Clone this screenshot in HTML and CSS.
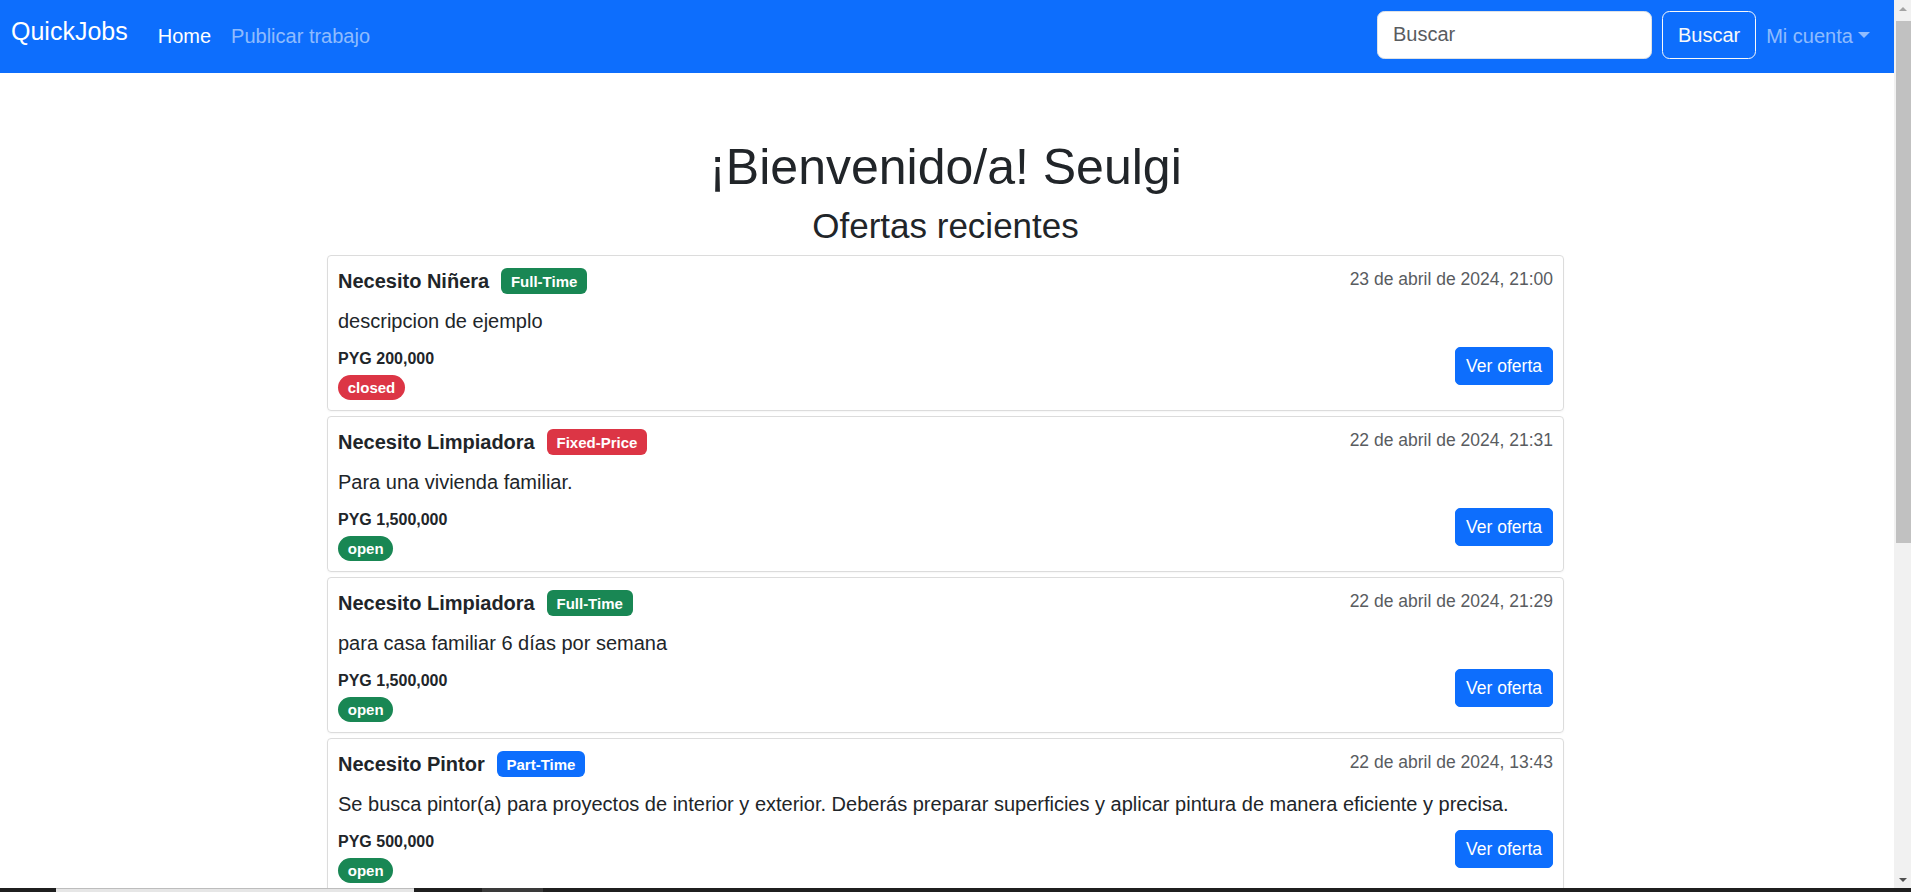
FILE: index.html
```html
<!DOCTYPE html>
<html lang="es">
<head>
<meta charset="utf-8">
<title>QuickJobs</title>
<link rel="stylesheet" href="styles.css">
</head>
<body>
<div class="screen">
  <div class="window">
    <div class="page">
      <nav class="navbar">
        <a class="brand" href="#">QuickJobs</a>
        <ul class="nav">
          <li><a class="nav-link active" href="#">Home</a></li>
          <li><a class="nav-link" href="#">Publicar trabajo</a></li>
        </ul>
        <form class="search">
          <input class="search-input" type="search" placeholder="Buscar">
          <button class="btn-outline" type="button">Buscar</button>
        </form>
        <a class="nav-link account" href="#">Mi cuenta</a>
      </nav>

      <main class="main">
        <h1 class="welcome">¡Bienvenido/a! Seulgi</h1>
        <h2 class="subtitle">Ofertas recientes</h2>

        <div class="card">
          <div class="card-head">
            <div class="title">Necesito Niñera <span class="badge green">Full-Time</span></div>
            <div class="date">23 de abril de 2024, 21:00</div>
          </div>
          <p class="desc">descripcion de ejemplo</p>
          <div class="card-foot">
            <div class="meta">
              <div class="price">PYG 200,000</div>
              <span class="pill red">closed</span>
            </div>
            <button class="btn-primary" type="button">Ver oferta</button>
          </div>
        </div>

        <div class="card">
          <div class="card-head">
            <div class="title">Necesito Limpiadora <span class="badge red">Fixed-Price</span></div>
            <div class="date">22 de abril de 2024, 21:31</div>
          </div>
          <p class="desc">Para una vivienda familiar.</p>
          <div class="card-foot">
            <div class="meta">
              <div class="price">PYG 1,500,000</div>
              <span class="pill green">open</span>
            </div>
            <button class="btn-primary" type="button">Ver oferta</button>
          </div>
        </div>

        <div class="card">
          <div class="card-head">
            <div class="title">Necesito Limpiadora <span class="badge green">Full-Time</span></div>
            <div class="date">22 de abril de 2024, 21:29</div>
          </div>
          <p class="desc">para casa familiar 6 días por semana</p>
          <div class="card-foot">
            <div class="meta">
              <div class="price">PYG 1,500,000</div>
              <span class="pill green">open</span>
            </div>
            <button class="btn-primary" type="button">Ver oferta</button>
          </div>
        </div>

        <div class="card">
          <div class="card-head">
            <div class="title">Necesito Pintor <span class="badge blue">Part-Time</span></div>
            <div class="date">22 de abril de 2024, 13:43</div>
          </div>
          <p class="desc">Se busca pintor(a) para proyectos de interior y exterior. Deberás preparar superficies y aplicar pintura de manera eficiente y precisa.</p>
          <div class="card-foot">
            <div class="meta">
              <div class="price">PYG 500,000</div>
              <span class="pill green">open</span>
            </div>
            <button class="btn-primary" type="button">Ver oferta</button>
          </div>
        </div>
      </main>
    </div>

    <div class="scrollbar">
      <div class="arrow"><span class="tri-up"></span></div>
      <div class="thumb"></div>
      <div class="track-fill"></div>
      <div class="arrow"><span class="tri-down"></span></div>
    </div>
  </div>
  <div class="taskbar">
    <span class="tb-gap"></span>
    <span class="tb-light"></span>
    <span class="tb-gap2"></span>
    <span class="tb-mid"></span>
  </div>
</div>
</body>
</html>
```

FILE: styles.css
```css
html, body {
  margin: 0;
  padding: 0;
  height: 100%;
  overflow: hidden;
}

body {
  font-family: "Liberation Sans", Arial, sans-serif;
  font-size: 20px;
  line-height: 1.5;
  color: #212529;
  background: #fff;
}

.screen {
  display: flex;
  flex-direction: column;
  height: 892px;
}

.window {
  display: flex;
  height: 888px;
}

.page {
  flex: 1;
  overflow: hidden;
  background: #fff;
}

/* ---------- navbar ---------- */
.navbar {
  display: flex;
  align-items: flex-start;
  height: 73px;
  box-sizing: border-box;
  padding: 0 14px 0 11px;
  background: #0d6efd;
}

.brand {
  font-size: 25px;
  line-height: 37.5px;
  margin-top: 13px;
  margin-right: 20px;
  color: #fff;
  text-decoration: none;
}

.nav {
  display: flex;
  list-style: none;
  margin: 21px 0 0;
  padding: 0;
}

.nav-link {
  display: block;
  padding: 0 10px;
  font-size: 20px;
  line-height: 30px;
  color: rgba(255, 255, 255, 0.55);
  text-decoration: none;
}

.nav-link.active {
  color: #fff;
}

.search {
  display: flex;
  gap: 10px;
  margin: 11px 0 0 auto;
}

.search-input {
  width: 275px;
  height: 47.5px;
  box-sizing: border-box;
  padding: 7.5px 15px;
  border: 1px solid #dee2e6;
  border-radius: 7.5px;
  background: #fff;
  font-family: inherit;
  font-size: 20px;
  color: #212529;
  outline: none;
}

.search-input::placeholder {
  color: #595c5f;
}

.btn-outline {
  height: 47.5px;
  box-sizing: border-box;
  padding: 7.5px 15px;
  border: 1px solid #f8f9fa;
  border-radius: 7.5px;
  background: transparent;
  color: #f8f9fa;
  font-family: inherit;
  font-size: 20px;
  line-height: 30px;
}

.account {
  margin-top: 21px;
}

.account::after {
  content: "";
  display: inline-block;
  margin-left: 5.1px;
  vertical-align: 5.1px;
  border-top: 6px solid;
  border-right: 6px solid transparent;
  border-left: 6px solid transparent;
}

/* ---------- main ---------- */
.main {
  padding: 64px 3px 0 0;
}

.welcome {
  margin: 0 0 8px;
  font-size: 50px;
  line-height: 60px;
  font-weight: 400;
  text-align: center;
}

.subtitle {
  margin: 0 0 8px;
  font-size: 35px;
  line-height: 42px;
  font-weight: 400;
  text-align: center;
}

.card {
  width: 1237px;
  box-sizing: border-box;
  margin: 0 auto 5px;
  padding: 10px;
  border: 1px solid #dcdcdc;
  border-radius: 4px;
  box-shadow: 0 1px 2px rgba(0, 0, 0, 0.04);
}

.card-head {
  display: flex;
  justify-content: space-between;
  align-items: flex-start;
  margin-bottom: 10px;
}

.title {
  display: flex;
  align-items: center;
  font-size: 20px;
  line-height: 30px;
  font-weight: 700;
}

.badge,
.pill {
  display: inline-block;
  font-size: 15px;
  font-weight: 700;
  line-height: 15px;
  padding: 5.25px 9.75px;
  color: #fff;
  white-space: nowrap;
}

.badge {
  margin-left: 12px;
  border-radius: 6px;
}

.pill {
  border-radius: 50px;
}

.green { background: #198754; }
.red { background: #dc3545; }
.blue { background: #0d6efd; }

.date {
  font-size: 17.5px;
  line-height: 26.25px;
  color: #595c5f;
}

.desc {
  margin: 0 0 10.5px;
  font-size: 20px;
  line-height: 30px;
}

.card-foot {
  display: flex;
  justify-content: space-between;
  align-items: flex-start;
}

.meta {
  display: flex;
  flex-direction: column;
  align-items: flex-start;
}

.price {
  font-size: 16px;
  line-height: 24px;
  font-weight: 700;
  margin-bottom: 4px;
}

.btn-primary {
  padding: 5px 10px;
  border: 1px solid #0d6efd;
  border-radius: 5px;
  background: #0d6efd;
  color: #fff;
  font-family: inherit;
  font-size: 17.5px;
  line-height: 26.25px;
}

/* ---------- fake scrollbar ---------- */
.scrollbar {
  width: 17px;
  display: flex;
  flex-direction: column;
  background: #f1f1f1;
}

.arrow {
  height: 17px;
  display: flex;
  align-items: center;
  justify-content: center;
}

.tri-up {
  border-bottom: 4px solid #a3a3a3;
  border-left: 4px solid transparent;
  border-right: 4px solid transparent;
}

.tri-down {
  border-top: 4px solid #505050;
  border-left: 4px solid transparent;
  border-right: 4px solid transparent;
}

.thumb {
  height: 522px;
  margin: 4px 0 0 2px;
  background: #c1c1c1;
}

.track-fill {
  flex: 1;
}

/* ---------- bottom screen strip ---------- */
.taskbar {
  display: flex;
  height: 4px;
  background: #1f1f1f;
}

.tb-gap { width: 56px; }
.tb-light { width: 358px; background: #e6e6e6; border-top: 1px solid #bdbdbd; box-sizing: border-box; }
.tb-gap2 { width: 68px; }
.tb-mid { width: 61px; background: #3a3a3a; }
```
